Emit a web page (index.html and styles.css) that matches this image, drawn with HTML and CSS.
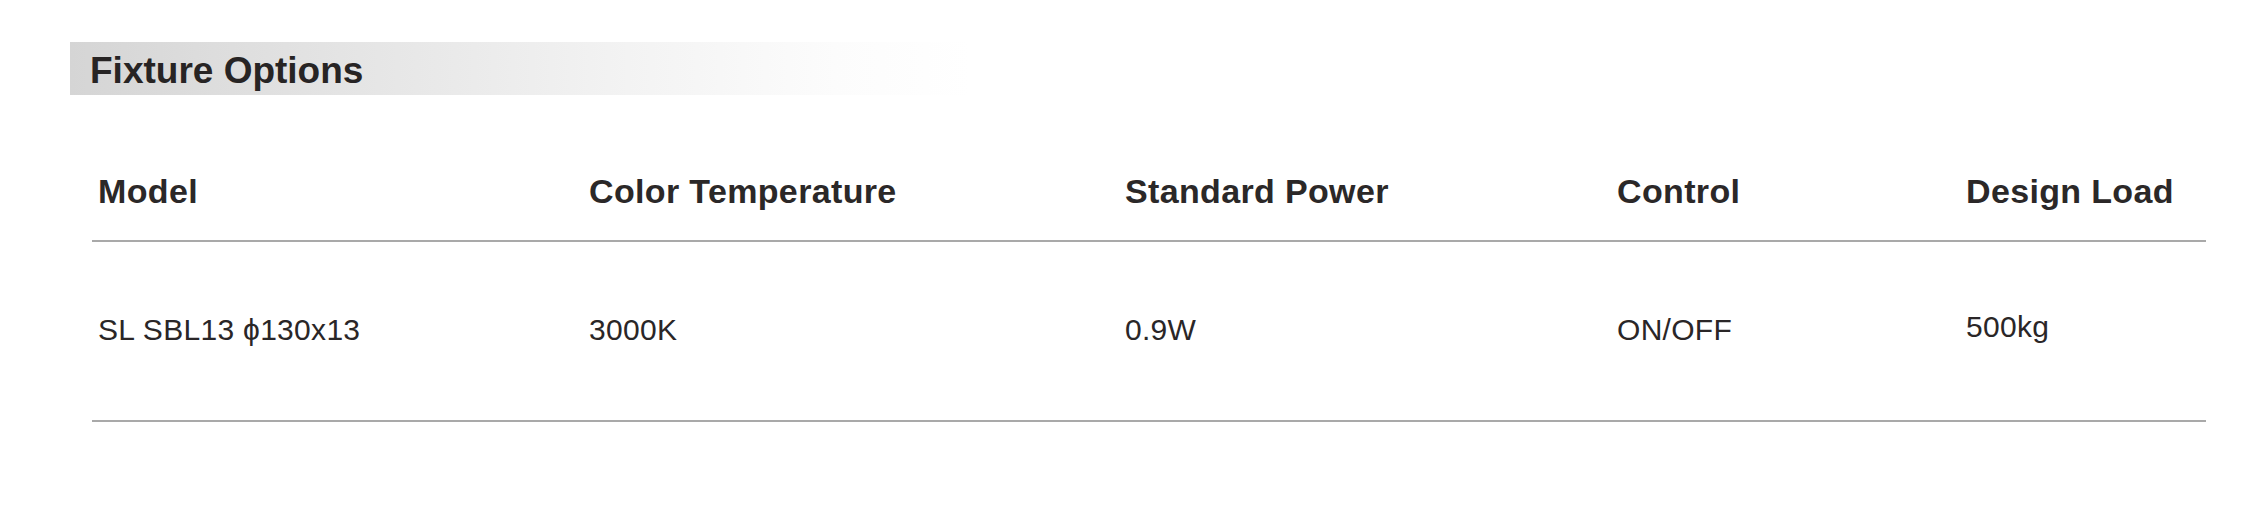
FILE: index.html
```html
<!DOCTYPE html>
<html lang="en">
<head>
<meta charset="utf-8">
<title>Fixture Options</title>
<link rel="stylesheet" href="styles.css">
</head>
<body>
<div class="page">
  <h2 class="section-title">Fixture Options</h2>
  <div class="spec-table">
    <div class="row head">
      <div class="cell">Model</div>
      <div class="cell">Color Temperature</div>
      <div class="cell">Standard Power</div>
      <div class="cell">Control</div>
      <div class="cell">Design Load</div>
    </div>
    <div class="row body">
      <div class="cell">SL SBL13 ϕ130x13</div>
      <div class="cell">3000K</div>
      <div class="cell">0.9W</div>
      <div class="cell">ON/OFF</div>
      <div class="cell load">500kg</div>
    </div>
  </div>
</div>
</body>
</html>
```

FILE: styles.css
```css
html, body {
  margin: 0;
  padding: 0;
  background: #ffffff;
}

.page {
  width: 2246px;
  height: 531px;
  padding-top: 42px;
  box-sizing: border-box;
  font-family: "Liberation Sans", Arial, sans-serif;
  color: #2a2627;
}

.section-title {
  margin: 0 0 0 70px;
  width: 900px;
  padding: 4px 0 0 20px;
  box-sizing: border-box;
  line-height: 49px;
  font-size: 37px;
  font-weight: 700;
  color: #272424;
  background: linear-gradient(to right, #d5d5d5 0%, #e4e4e4 30%, #f3f3f3 62%, #fcfcfc 85%, #ffffff 100%);
}

.spec-table {
  margin-left: 92px;
  width: 2114px;
}

.row {
  display: grid;
  grid-template-columns: 491px 536px 492px 349px 246px;
  border-bottom: 2px solid #a9a9a9;
}

.cell {
  padding-left: 6px;
  white-space: nowrap;
}

.row.head {
  padding: 76px 0 29px;
  font-size: 34px;
  line-height: 40px;
  font-weight: 700;
  letter-spacing: 0.35px;
  color: #2b2828;
}

.row.body {
  padding: 70px 0 72px;
  font-size: 30px;
  line-height: 36px;
  font-weight: 400;
  letter-spacing: 0.3px;
}

.cell.load {
  position: relative;
  top: -3px;
}
```
